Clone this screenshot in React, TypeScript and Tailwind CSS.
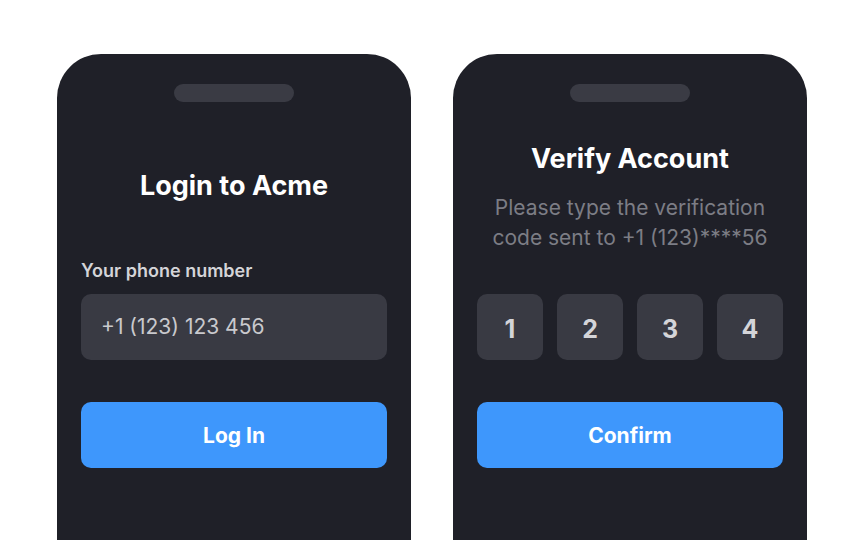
import React from 'react';

const font = { fontFamily: 'Inter, "Liberation Sans", sans-serif' };

function Phone({ children }: { children: React.ReactNode }) {
  return (
    <div className="w-[354px] h-[486px] bg-[#1f2028] rounded-t-[44px] flex flex-col items-center px-6 pt-[30px]">
      <div className="w-[120px] h-[18px] rounded-full bg-[#3a3b44]" />
      {children}
    </div>
  );
}

export default function App() {
  const code = ['1', '2', '3', '4'];

  return (
    <div className="w-[864px] h-[540px] bg-white overflow-hidden" style={font}>
      <div className="flex gap-[42px] pl-[57px] pt-[54px]">
        <Phone>
          <h1 className="mt-[68px] text-[27px] leading-[32px] font-bold text-white">Login to Acme</h1>
          <div className="w-full mt-[58px]">
            <label className="block text-[18px] leading-[22px] font-semibold text-[#d4d4d8]">
              Your phone number
            </label>
            <div className="mt-[12px] h-[66px] rounded-[10px] bg-[#393a43] flex items-center px-5 text-[21px] text-[#c9c9cd]">
              +1 (123) 123 456
            </div>
          </div>
          <button className="w-full mt-[42px] h-[66px] pt-[2px] rounded-[10px] bg-[#3e97fc] text-white text-[21px] font-bold">
            Log In
          </button>
        </Phone>

        <Phone>
          <h1 className="mt-[41px] text-[27px] leading-[32px] font-bold text-white">Verify Account</h1>
          <p className="mt-[18px] text-center text-[21px] leading-[30px] text-[#7c7d85]">
            Please type the verification
            <br />
            code sent to +1 (123)****56
          </p>
          <div className="w-full mt-[41px] flex gap-[14px]">
            {code.map((d) => (
              <div
                key={d}
                className="w-[66px] h-[66px] pt-[5px] rounded-[10px] bg-[#393a43] flex items-center justify-center text-[25px] font-bold text-[#d4d4d8]"
              >
                {d}
              </div>
            ))}
          </div>
          <button className="w-full mt-[42px] h-[66px] pt-[2px] rounded-[10px] bg-[#3e97fc] text-white text-[21px] font-bold">
            Confirm
          </button>
        </Phone>
      </div>
    </div>
  );
}
